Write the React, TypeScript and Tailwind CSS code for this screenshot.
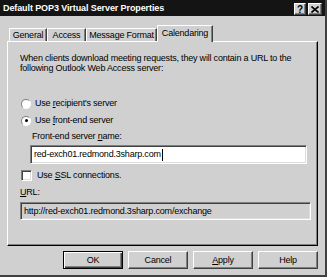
const raised =
  "border border-t-white border-l-white border-r-[#404040] border-b-[#404040] shadow-[inset_-1px_-1px_0_#808080]";
const sunken =
  "border border-t-[#808080] border-l-[#808080] border-r-white border-b-white shadow-[inset_1px_1px_0_#404040,inset_-1px_-1px_0_#dcdcdc]";

function Tab({ label, active, w }: { label: string; active?: boolean; w: string }) {
  if (active) {
    return (
      <div
        className={`relative z-10 -mb-px flex h-[17px] items-start justify-center border border-b-0 border-t-white border-l-white border-r-[#404040] bg-[#d0d0d0] pt-[2px] shadow-[inset_-1px_0_0_#808080] ${w}`}
      >
        {label}
      </div>
    );
  }
  return (
    <div
      className={`flex h-[13px] items-start justify-center border border-b-0 border-t-white border-l-white border-r-[#404040] pt-[1px] shadow-[inset_-1px_0_0_#808080] ${w}`}
    >
      {label}
    </div>
  );
}

function Radio({ checked }: { checked?: boolean }) {
  return (
    <span className="relative inline-block h-[10px] w-[10px] shrink-0 rounded-full border border-t-[#808080] border-l-[#808080] border-r-white border-b-white bg-white">
      {checked && <span className="absolute left-[2.5px] top-[2.5px] h-[3px] w-[3px] rounded-full bg-black" />}
    </span>
  );
}

function Button({ label, def }: { label: React.ReactNode; def?: boolean }) {
  return (
    <div
      className={
        def
          ? "flex h-[18px] w-[60px] items-center justify-center border border-black bg-[#d0d0d0] shadow-[inset_1px_1px_0_white,inset_-1px_-1px_0_#404040,inset_-2px_-2px_0_#808080]"
          : `flex h-[18px] w-[60px] items-center justify-center bg-[#d0d0d0] ${raised}`
      }
    >
      {label}
    </div>
  );
}

export default function App() {
  return (
    <div
      className="flex h-[277px] w-[327px] flex-col overflow-hidden border-r-2 border-b-2 border-r-[#404040] border-b-[#404040] bg-[#d0d0d0] text-[9px] leading-[11px] tracking-[-0.2px] text-black whitespace-nowrap"
      style={{ fontFamily: '"Liberation Sans", Arial, sans-serif' }}
    >
      {/* Title bar */}
      <div className="flex h-[16px] shrink-0 items-center justify-between bg-[#141414] pl-[3px] pr-[3px]">
        <span className="text-[9px] font-bold tracking-[-0.1px] text-white">Default POP3 Virtual Server Properties</span>
        <div className="flex gap-[2px] pt-[2px]">
          <div className={`flex h-[12px] w-[12px] items-center justify-center bg-[#d0d0d0] text-[10px] font-bold ${raised}`}>?</div>
          <div className={`flex h-[12px] w-[14px] items-center justify-center bg-[#d0d0d0] ${raised}`}>
            <svg width="8" height="7" viewBox="0 0 8 7">
              <path d="M0.5 0.5 L7.5 6.5 M7.5 0.5 L0.5 6.5" stroke="black" strokeWidth="1.6" />
            </svg>
          </div>
        </div>
      </div>

      {/* Tabs */}
      <div className="ml-[9px] mt-[9px] flex items-end">
        <Tab label="General" w="w-[38px]" />
        <Tab label="Access" w="w-[39px]" />
        <Tab label="Message Format" w="w-[71px]" />
        <Tab label="Calendaring" active w="w-[56px]" />
      </div>

      {/* Panel */}
      <div className="mx-[7px] flex h-[205px] flex-col border border-t-white border-l-white border-r-black border-b-black px-[12px] pt-[11px] shadow-[inset_-1px_-1px_0_#808080]">
        <p className="leading-[10px]">
          When clients download meeting requests, they will contain a URL to the
          <br />
          following Outlook Web Access server:
        </p>

        <div className="mt-[25px] flex items-center gap-[4px] pl-[1px]">
          <Radio />
          <span>
            Use <u>r</u>ecipient's server
          </span>
        </div>
        <div className="mt-[6px] flex items-center gap-[4px] pl-[1px]">
          <Radio checked />
          <span>
            Use <u>f</u>ront-end server
          </span>
        </div>

        <div className="ml-[12px] mt-[5px]">
          Front-end server <u>n</u>ame:
        </div>
        <div className={`ml-[10px] mt-[3px] flex h-[19px] w-[277px] items-center bg-white px-[3px] ${sunken}`}>
          red-exch01.redmond.3sharp.com
          <span className="ml-[1px] inline-block h-[12px] w-px bg-black" />
        </div>

        <div className="mt-[6px] flex items-center gap-[5px] pl-[1px]">
          <span className={`inline-block h-[11px] w-[11px] bg-white ${sunken}`} />
          <span>
            Use <u>S</u>SL connections.
          </span>
        </div>

        <div className="mt-[6px]">
          <u>U</u>RL:
        </div>
        <div className={`mt-[4px] flex h-[18px] w-[291px] items-center bg-[#d0d0d0] px-[3px] ${sunken}`}>
          http://red-exch01.redmond.3sharp.com/exchange
        </div>
      </div>

      {/* Buttons */}
      <div className="mt-[5px] flex justify-end gap-[5px] pr-[7px]">
        <Button label="OK" def />
        <Button label="Cancel" />
        <Button
          label={
            <span>
              <u>A</u>pply
            </span>
          }
        />
        <Button label="Help" />
      </div>
    </div>
  );
}
